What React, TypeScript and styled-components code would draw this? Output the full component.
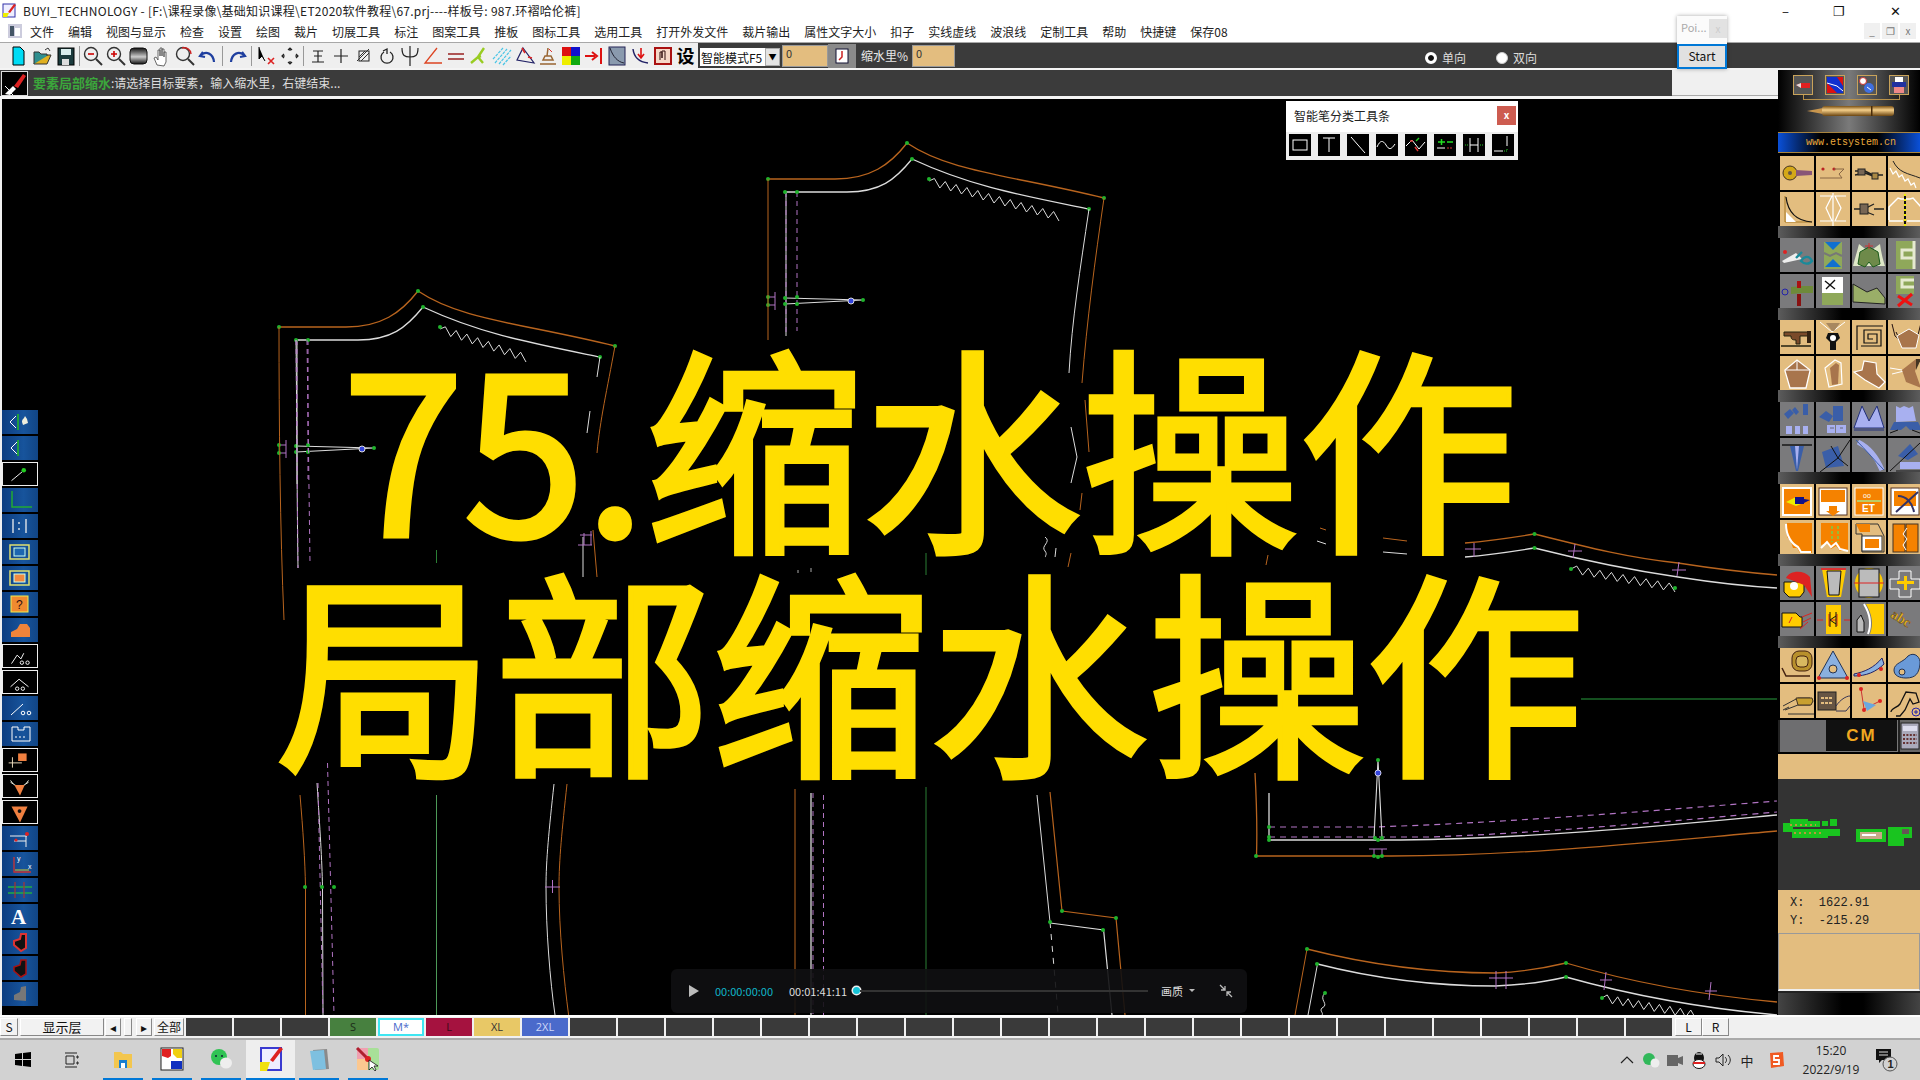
import React from "react";
import styled, { createGlobalStyle } from "styled-components";

const Global = createGlobalStyle`
  html, body { margin: 0; padding: 0; background: #f0f0f0; overflow: hidden; }
  * { box-sizing: border-box; }
`;
const UI = `"Noto Sans CJK SC", "Open Sans", sans-serif`;

const Screen = styled.div`
  position: relative; width: 1920px; height: 1080px; overflow: hidden;
  display: flex; flex-direction: column; font-family: ${UI}; background: #f0f0f0; color: #111;
`;
const TitleBar = styled.div`
  height: 22px; background: #fff; display: flex; align-items: center; padding: 0 0 2px 2px; gap: 6px;
  font-size: 12px; letter-spacing: .25px; white-space: nowrap; color: #222;
`;
const WinCtl = styled.div`
  margin-left: auto; display: flex; width: 138px; justify-content: space-between; padding-right: 19px;
  font-size: 13px; color: #111;
`;
const MenuBar = styled.div`
  height: 20px; background: #fff; display: flex; align-items: center; padding: 0 0 2px 8px; font-size: 12px; color: #222;
`;
const MenuItems = styled.div`display: flex; gap: 14px; margin-left: 8px; white-space: nowrap;`;
const MdiCtl = styled.div`
  margin-left: auto; display: flex; gap: 2px; padding-right: 4px;
`;
const MdiBtn = styled.div`
  width: 16px; height: 16px; background: #f0f0f0; color: #777; font-size: 10px; line-height: 16px; text-align: center;
`;
const ToolRow = styled.div`
  height: 28px; display: flex; border-top: 1px solid #a8a8a8; border-bottom: 2px solid #f4f4f4; background: #3b3b3b;
`;
const ToolIcons = styled.div`
  width: 698px; height: 100%; background: #efefef; display: flex; align-items: center; padding-left: 8px;
`;
const ToolBtn = styled.div`
  width: 23px; height: 23px; flex: none; display: flex; align-items: center; justify-content: center;
  font-size: 18px; line-height: 23px; font-weight: 700; color: #000;
`;
const ToolSep = styled.div<{ $w: number }>`
  width: ${p => p.$w}px; flex: none; height: 20px; position: relative;
  &::after { content: ""; display: block; width: 1px; height: 100%; margin: 0 auto; background: #999; }
`;
const ToolRight = styled.div`
  flex: 1; display: flex; align-items: center; padding-left: 2px; color: #ddd; font-size: 12px;
`;
const ModeSelect = styled.div`
  width: 80px; height: 18px; background: #fff; color: #111; font-size: 12px; display: flex; align-items: center; white-space: nowrap;
  overflow: hidden; padding-left: 1px; position: relative; margin-top: 3px;
`;
const SelectArrow = styled.span`
  position: absolute; right: 0; top: 0; width: 15px; height: 18px; background: #e4e4e4; border: 1px solid #aaa; color: #000;
  font-size: 8px; line-height: 16px; text-align: center;
`;
const TanInput = styled.div<{ $w: number }>`
  width: ${p => p.$w}px; height: 22px; margin-left: 2px; background: #e3bd7f; border: 1px solid #999; color: #333;
  font-size: 11px; line-height: 14px; padding-left: 3px;
`;
const SquareBtn = styled.div`
  width: 28px; height: 24px; background: #8a8a8a; display: flex; align-items: center; justify-content: center;
`;
const ToolLabel = styled.span`margin-left: 5px; margin-right: 2px; font-size: 12px; white-space: nowrap; color: #e8e8e8;`;
const RadioWrap = styled.label<{ $ml: number }>`
  margin-left: ${p => p.$ml}px; margin-top: 4px; display: flex; align-items: center; gap: 5px; color: #ddd; font-size: 12px;
`;
const RadioDot = styled.span<{ $on?: boolean }>`
  width: 12px; height: 12px; border-radius: 50%; background: #fff; display: block;
  border: ${p => (p.$on ? "3px solid #fff" : "1px solid #ccc")};
  box-shadow: ${p => (p.$on ? "inset 0 0 0 4px #111" : "none")};
`;
const Popover = styled.div`
  position: absolute; left: 1677px; top: 16px; width: 50px; height: 53px; background: #fbfbfb;
  box-shadow: 0 0 4px rgba(0,0,0,.35); display: flex; flex-direction: column; z-index: 5;
`;
const PopHead = styled.div`
  height: 28px; display: flex; font-size: 11px; color: #aaa; padding: 3px 0 0 4px; justify-content: space-between;
`;
const PopClose = styled.span`
  width: 18px; height: 19px; background: #e2e2e2; color: #ccc; text-align: center; font-size: 10px; line-height: 19px;
`;
const StartBtn = styled.div`
  height: 25px; border: 2px solid #0078d7; background: #e1e1e1; color: #111; font-size: 12px; text-align: center; line-height: 20px;
`;
const Workspace = styled.div`height: 945px; display: flex;`;
const WorkColumn = styled.div`width: 1778px; display: flex; flex-direction: column;`;
const PromptRow = styled.div`
  height: 29px; display: flex; background: #f0f0f0; border-bottom: 3px solid #f4f4f4; box-shadow: inset 0 -1px 0 #aaa;
`;
const PromptBar = styled.div`
  width: 1672px; background: #3b3b3b; display: flex; align-items: center; font-size: 12px; color: #ddd; padding: 0 0 2px 1px;
`;
const PromptGreen = styled.span`color: #3ba63b; font-weight: 700; font-size: 13px; margin-left: 5px;`;
const PromptIcon = styled.div`
  width: 27px; height: 25px; background: #000; border: 1px solid #ddd; display: flex; margin-top: 2px;
`;
const Canvas = styled.div`
  flex: 1; margin-left: 2px; background: #000; position: relative; overflow: hidden;
`;
const CanvasArt = styled.svg`position: absolute; left: 0; top: 0;`;
const BigTitle = styled.div`
  position: absolute; left: 0; top: 230px; width: 1856px; text-align: center; color: #ffde00;
  font-family: "Noto Sans CJK SC", "Liberation Sans", sans-serif; font-weight: 400; font-size: 218px; line-height: 224px; white-space: nowrap;
  -webkit-text-stroke: 5px #ffde00;
`;
const LeftTools = styled.div`
  position: absolute; left: 0; top: 311px; display: flex; flex-direction: column; gap: 2px;
`;
const LeftBtn = styled.div<{ $dark?: boolean }>`
  width: 36px; height: 24px; display: flex;
  background: ${p => (p.$dark ? "#000" : "linear-gradient(90deg,#0d3d80,#17549c 60%,#114585)")};
  border: ${p => (p.$dark ? "1px solid #eee" : "none")};
`;
const Palette = styled.div`
  position: absolute; left: 1284px; top: 2px; width: 232px; height: 59px; background: #fff;
  display: flex; flex-direction: column;
`;
const PaletteHead = styled.div`
  height: 31px; padding: 0 2px 2px 8px; display: flex; align-items: center; justify-content: space-between; font-size: 12px; color: #222;
`;
const PaletteClose = styled.span`
  width: 19px; height: 19px; background: #cd5c50; color: #fff; font-size: 10px; font-weight: 700; text-align: center; line-height: 18px;
`;
const PaletteRow = styled.div`
  flex: 1; background: #eee; display: flex; gap: 7px; padding: 2px 3px;
`;
const PaletteBtn = styled.div`width: 22px; height: 22px; background: #000; display: flex;`;
const Player = styled.div`
  position: absolute; left: 669px; top: 870px; width: 576px; height: 44px; border-radius: 6px; background: rgba(16,16,18,.9);
  display: flex; align-items: center; font-size: 11px; color: #ddd; padding: 0 0 1px 18px;
`;
const PlayIcon = styled.div`
  width: 0; height: 0; border-left: 10px solid #bbb; border-top: 6px solid transparent; border-bottom: 6px solid transparent;
`;
const TimeNow = styled.span`color: #10b5c8; margin-left: 16px; width: 74px; white-space: nowrap;`;
const TimeAll = styled.span`color: #ddd; margin-left: 0; width: 58px; white-space: nowrap;`;
const Thumb = styled.span`
  width: 7px; height: 7px; border-radius: 50%; background: #16c4d8; box-shadow: 0 0 0 1.5px #eee; flex: none; margin-left: 6px;
`;
const Track = styled.div`width: 288px; height: 2px; background: #333; margin-left: 0;`;
const Quality = styled.span`margin-left: 13px; white-space: nowrap;`;
const Caret = styled.span`
  margin-left: 6px; width: 0; height: 0; border-top: 3px solid #bbb; border-left: 3px solid transparent; border-right: 3px solid transparent;
`;
const Shrink = styled.div`margin-left: 24px; display: flex;`;

const Panel = styled.div`
  width: 142px; display: flex; flex-direction: column; background: #000;
`;
const PanelHead = styled.div`
  height: 62px; background: linear-gradient(90deg,#000,#7a7a7a 50%,#000); position: relative; display: flex; flex-direction: column; align-items: center; padding-left: 4px;
`;
const HeadIcons = styled.div`display: flex; gap: 12px; margin-top: 5px;`;
const HeadIcon = styled.div`width: 20px; height: 20px; border: 1px solid #c9a35a; background: #555; display: flex;`;
const HeadRail = styled.div`
  width: 97px; height: 5px; border: 1px solid #b8914a; border-top: none; margin-bottom: 5px;
`;
const Banner = styled.div`
  height: 21px; background: linear-gradient(90deg,#0a50d8,#000 30%,#000 70%,#0a50d8); border-top: 1px solid #a8843e; border-bottom: 1px solid #a8843e;
  color: #e8a83c; font-family: "Liberation Mono", monospace; font-size: 10px; text-align: center; line-height: 19px; padding-left: 4px;
`;
const Band = styled.div`
  height: 12px; background: linear-gradient(90deg,#5c5c5c,#000 45%,#000 60%,#5c5c5c);
`;
const TileGrid = styled.div<{ $first?: boolean }>`
  display: grid; grid-template-columns: repeat(4, 34px); gap: 2px; padding-left: 2px; overflow: hidden; width: 142px;
  margin-top: ${p => (p.$first ? 3 : 0)}px; background: #000;
`;
const Tile = styled.div<{ $tone: string }>`
  width: 34px; height: 34px; display: flex;
  background: ${p => (p.$tone === "tan" ? "#e3bd7f" : "#7a7a7c")};
`;
const UnitRow = styled.div`
  height: 32px; margin-top: 2px; display: flex; background: #222; padding-left: 2px;
`;
const UnitGray = styled.div`width: 46px; background: #6e6e70;`;
const UnitCM = styled.div`
  width: 72px; background: #111; color: #f0a820; font-family: "Liberation Sans", sans-serif; font-weight: 700; font-size: 17px; letter-spacing: 2px; text-align: center; line-height: 31px;
  border-bottom: 1px solid #777; border-right: 1px solid #777;
`;
const UnitCalc = styled.div`margin-left: 2px; width: 20px; background: #666; display: flex; flex: 1;`;
const TanStrip = styled.div`height: 25px; background: #e3bd7f; margin-top: 2px;`;
const MiniMap = styled.div`height: 111px; background: #333; display: flex; align-items: center;`;
const Coords = styled.div`
  height: 43px; background: #e3bd7f; font-family: "Liberation Mono", monospace; font-size: 12px; color: #222; padding: 4px 0 0 12px; line-height: 18px; white-space: pre;
`;
const NoteBox = styled.div`
  height: 58px; background: #e3bd7f; border: 1px solid #999; border-bottom: 2px solid #eee;
`;
const PanelFoot = styled.div`flex: 1; background: linear-gradient(90deg,#444,#000 45%,#000 60%,#444); border-top: 2px solid #222;`;

const LayerBar = styled.div`
  height: 25px; display: flex; align-items: center; padding-bottom: 1px; border-top: 2px solid #fff; border-bottom: 2px solid #aaa; background: #f0f0f0; font-size: 12px;
`;
const LayerBtn = styled.div<{ $w: number; $ml?: number; $big?: boolean }>`
  width: ${p => p.$w}px; height: 18px; margin-left: ${p => p.$ml ?? 0}px; background: #f2f2f2; text-align: center; line-height: 16px; font-size: ${p => (p.$big ? 13 : 12)}px; color: #111;
  border-right: 1px solid #888; border-bottom: 1px solid #888; border-top: 1px solid #fff; border-left: 1px solid #fff; flex: none;
`;
const Cells = styled.div`display: flex; gap: 2px; margin-left: 2px;`;
const Cell = styled.div<{ $bg: string; $fg?: string; $ring?: boolean }>`
  width: 46px; height: 18px; background: ${p => p.$bg}; color: ${p => p.$fg ?? "#222"}; font-size: 11px; text-align: center; line-height: 17px; flex: none;
  font-family: "Open Sans", sans-serif;
  border: ${p => (p.$ring ? "2px solid #3fe6f2" : "none")};
  ${p => (p.$ring ? "line-height: 13px;" : "")}
`;
const Taskbar = styled.div`
  flex: 1; background: #d2d2d2; display: flex; align-items: stretch; position: relative;
`;
const TaskLeft = styled.div`display: flex; align-items: center;`;
const TaskPlain = styled.div<{ $w: number }>`
  width: ${p => p.$w}px; display: flex; align-items: center; justify-content: center;
`;
const TaskApp = styled.div<{ $active?: boolean; $ml: number }>`
  width: 40px; height: 40px; margin-left: ${p => p.$ml}px; display: flex; align-items: center; justify-content: center;
  border-bottom: 2px solid #0078d7;
  ${p => (p.$active ? "width: 49px; background: #eee;" : "")}
`;
const Tray = styled.div`
  margin-left: auto; display: flex; align-items: center; padding-right: 20px;
`;
const TrayIcon = styled.div<{ $w: number }>`
  width: ${p => p.$w}px; display: flex; justify-content: center; font-size: 13px; color: #222;
`;
const Clock = styled.div`
  width: 72px; margin-left: 2px; text-align: center; font-size: 12px; line-height: 19px; color: #222; font-family: "Open Sans", sans-serif;
`;
const Notify = styled.div`margin-left: 7px; display: flex;`;

/* ---------- icon data ---------- */
type N = React.ReactNode;
const Ic = ({ s = 22, h, c }: { s?: number; h?: number; c: N }) => (
  <svg width={s} height={h ?? s} viewBox={`0 0 ${s} ${h ?? s}`} fill="none">{c}</svg>
);

const toolGroups: N[][] = [
  [
    <path d="M4 2h7l4 4v14H4z" fill="#00dcf5" stroke="#000" />,
    <><path d="M2 19l3-9h14l-4 9z" fill="#e0b020" stroke="#333" /><path d="M2 19V7h5l2 2h6v2" fill="#2f8f8f" stroke="#333" /><path d="M13 5l3-2 2 3" stroke="#333" /></>,
    <><rect x="3" y="3" width="16" height="17" fill="#1b3b3d" stroke="#000" /><rect x="6" y="4" width="10" height="6" fill="#d8ecec" /><rect x="7" y="14" width="7" height="6" fill="#ddd" /></>,
  ],
  [
    <><circle cx="9" cy="9" r="6.5" stroke="#333" strokeWidth="1.4" /><path d="M14 14l6 6" stroke="#333" strokeWidth="2" /><path d="M6 9h6" stroke="#c00" strokeWidth="1.6" /></>,
    <><circle cx="9" cy="9" r="6.5" stroke="#333" strokeWidth="1.4" /><path d="M14 14l6 6" stroke="#333" strokeWidth="2" /><path d="M6 9h6M9 6v6" stroke="#c00" strokeWidth="1.6" /></>,
    <><rect x="2" y="3" width="17" height="16" rx="4" fill="url(#mon)" stroke="#111" /><defs><linearGradient id="mon" x1="0" y1="0" x2="0" y2="1"><stop offset="0" stopColor="#111" /><stop offset=".55" stopColor="#ccc" /><stop offset="1" stopColor="#111" /></linearGradient></defs></>,
    <path d="M6 20l-3-7 2-1 2 3V5h2v6-8h2v8-7h2v8-5h2v10l-2 4z" fill="#fff" stroke="#444" strokeWidth=".8" />,
    <><circle cx="9" cy="9" r="6.5" stroke="#333" strokeWidth="1.4" /><path d="M14 14l6 6" stroke="#333" strokeWidth="2" /><path d="M8 3c5-1 9 2 9 6" stroke="#c22" strokeWidth="1.4" /></>,
    <path d="M6 7l-3 4 5 1M4 10c5-4 12-2 13 7" stroke="#1f3f9f" strokeWidth="2.2" />,
  ],
  [<path d="M16 7l3 4-5 1M18 10c-5-4-12-2-13 7" stroke="#1f3f9f" strokeWidth="2.2" />],
  [
    <><path d="M3 2v12l3-3 3 5" fill="#000" stroke="#000" /><path d="M12 13l6 6M18 13l-6 6" stroke="#d22" strokeWidth="1.6" /></>,
    <path d="M11 3v3M11 16v3M3 11h3M16 11h3M9 5l2-2 2 2M9 17l2 2 2-2M5 9l-2 2 2 2M17 9l2 2-2 2" stroke="#222" strokeWidth="1.2" />,
  ],
  [
    <path d="M6 6h10M11 6v11M7 11h8M5 17h12" stroke="#222" strokeWidth="1.2" />,
    <path d="M11 4v14M4 11h14" stroke="#222" strokeWidth="1.2" />,
    <><rect x="6" y="6" width="10" height="10" stroke="#222" /><path d="M4 16L16 4M8 16l8-8M6 12l6-6" stroke="#333" /></>,
    <path d="M7 6l4-2v5M14 7a6 6 0 1 1-6 0" stroke="#222" strokeWidth="1.3" />,
    <path d="M11 1v20M3 3c0 8 3 9 8 9s8-1 8-9" stroke="#222" strokeWidth="1.2" />,
    <path d="M15 3L3 18h17" stroke="#d42" strokeWidth="1.3" />,
    <path d="M3 9h16M3 14h16" stroke="#922" strokeWidth="1.5" />,
    <path d="M16 3l-6 9 5 6M3 18l7-6 3-1" stroke="#9c2" strokeWidth="2.4" />,
    <path d="M4 18L16 4M8 19L20 5M2 14L12 3M12 20l8-9" stroke="#49c5e6" strokeWidth="1.2" strokeDasharray="3 1" />,
    <><path d="M9 3l11 15L3 15z" stroke="#226" strokeWidth="1.2" /><path d="M8 3l3 5M14 12l4 1" stroke="#d22" strokeWidth="1.6" /></>,
    <><path d="M3 19h16M6 15h10l-2-4H8zM10 11l1-8" stroke="#963" strokeWidth="1.5" /><path d="M12 4l3 3" stroke="#d33" /></>,
    <><rect x="2" y="2" width="9" height="9" fill="#d11" /><rect x="11" y="2" width="9" height="9" fill="#11c" /><rect x="2" y="11" width="9" height="9" fill="#ee0" /><rect x="11" y="11" width="9" height="9" fill="#1a1" /></>,
    <path d="M2 11h10m-3-4l5 4-5 4M18 3v16" stroke="#d11" strokeWidth="2" />,
    <><rect x="3" y="2" width="16" height="18" fill="#8a9aae" stroke="#225" /><path d="M4 3c3 9 8 14 14 15" stroke="#223" /></>,
    <><path d="M4 4c1 8 5 13 15 14" stroke="#226" strokeWidth="1.5" /><path d="M12 3v9m-3-3l3 4 3-4" stroke="#d11" strokeWidth="1.6" /></>,
    <><rect x="3" y="3" width="16" height="16" fill="#f6d8c8" stroke="#a11" strokeWidth="2" /><path d="M8 15V7h2v6-7h3v9" stroke="#311" /></>,
    <span>设</span>,
  ],
];
const leftIcons: { d?: boolean; c: N }[] = [
  { c: <><path d="M14 6l-6 6 6 6" stroke="#fff" /><path d="M16 4v16" stroke="#2b2" strokeWidth="1.5" /><path d="M20 12c0-3 2-3 3-6l2 3 1 4-5 2z" fill="#eed" /></> },
  { c: <><path d="M15 6l-6 6 6 6" stroke="#fff" /><path d="M16 4v16" stroke="#2b2" strokeWidth="1.5" /></> },
  { d: true, c: <><path d="M9 18L21 8" stroke="#fff" /><circle cx="22" cy="7" r="2.4" fill="#2c2" /></> },
  { c: <path d="M10 3v16h20" stroke="#2a3" strokeWidth="1.5" /> },
  { c: <path d="M11 5v14M24 5v14M17 8v2M17 14v2" stroke="#eee" strokeWidth="1.3" /> },
  { c: <><rect x="8" y="5" width="19" height="14" stroke="#dfe070" strokeWidth="1.5" /><rect x="12" y="8" width="11" height="8" fill="#1c66b0" stroke="#cfe" /></> },
  { c: <><rect x="8" y="5" width="19" height="14" stroke="#dfe070" strokeWidth="1.5" /><rect x="12" y="8" width="11" height="8" fill="#f08a40" stroke="#cfe" /></> },
  { c: <><rect x="9" y="4" width="17" height="16" fill="#f08a30" stroke="#ee5" /><text x="14" y="17" fontSize="12" fill="#311" fontFamily="Liberation Sans">?</text></> },
  { c: <path d="M9 19v-5l6-3 3-5h7l3 4v9z" fill="#f0843a" /> },
  { d: true, c: <><path d="M9 19l6-9 4 4 3-6" stroke="#fff" /><circle cx="20" cy="18" r="1.8" stroke="#fff" /><circle cx="26" cy="18" r="1.8" stroke="#fff" /></> },
  { d: true, c: <><path d="M8 16l9-8 10 8" stroke="#fff" /><circle cx="15" cy="18" r="1.8" stroke="#fff" /><circle cx="21" cy="18" r="1.8" stroke="#fff" /></> },
  { c: <><path d="M9 19l12-11" stroke="#fff" /><circle cx="21" cy="17" r="1.8" stroke="#fff" /><circle cx="27" cy="17" r="1.8" stroke="#fff" /></> },
  { c: <><path d="M10 5v14h18V5h-6v3h-6V5z" stroke="#fff" /><path d="M13 15h2M17 15h2M21 15h2" stroke="#fff" /></> },
  { d: true, c: <><path d="M10 8v11M6 14h14" stroke="#f0e0c0" /><rect x="16" y="4" width="9" height="8" fill="#f08040" /></> },
  { d: true, c: <><path d="M8 7l8 5M27 7l-8 5M8 5l3 4M27 5l-3 4" stroke="#eed" /><path d="M12 10h11l-5 11z" fill="#f08040" /></> },
  { d: true, c: <><path d="M9 5h17l-8 17z" fill="#f08040" /><circle cx="17.5" cy="10" r="2" fill="#111" /></> },
  { c: <><path d="M8 10h17M12 15h12M24 10v11" stroke="#eee" /><circle cx="25" cy="8" r="2" fill="#d22" /><circle cx="14" cy="14" r="1.6" fill="#d22" /></> },
  { c: <><path d="M12 5v15h17" stroke="#c33" strokeWidth="1.3" /><path d="M13 18h14" stroke="#cc3" /><text x="15" y="9" fontSize="7" fill="#fff" fontFamily="Liberation Sans">y</text><text x="26" y="17" fontSize="7" fill="#fff" fontFamily="Liberation Sans">x</text></> },
  { c: <><path d="M6 9h24M6 15h24" stroke="#2a4" strokeWidth="1.3" /><path d="M13 4v16M22 4v16" stroke="#a33" strokeWidth="1.2" /></> },
  { c: <text x="9" y="20" fontSize="21" fontWeight="700" fill="#fff" fontFamily="Liberation Serif">A</text> },
  { c: <path d="M24 4v14l-5 3-7-6v-4l6-2 1-5z" fill="#111" stroke="#d33" strokeWidth="2" /> },
  { c: <path d="M24 4v14l-5 3-7-6v-4l6-2 1-5z" fill="#111" stroke="#a11" strokeWidth="1.5" /> },
  { c: <path d="M24 4v15l-12-1v-5l6-3 1-5z" fill="#777" /> },
];

const paletteIcons: N[] = [
  <rect x="4" y="6" width="14" height="10" stroke="#fff" />,
  <path d="M5 4h12M11 4v14" stroke="#fff" />,
  <path d="M4 3l14 16" stroke="#fff" />,
  <path d="M1 13c3-7 6-7 9-2s5 5 9-1" stroke="#fff" />,
  <><path d="M1 12l6-6 7 9 6-7" stroke="#fff" /><path d="M5 7h3M10 13l3 4" stroke="#d33" strokeWidth="1.5" /><path d="M14 4l-3 3" stroke="#2c2" strokeWidth="1.4" /></>,
  <><path d="M4 8h7M7.5 5v6M13 8h6" stroke="#2d2" strokeWidth="1.5" /><path d="M3 14h8" stroke="#fff" /><path d="M13 14h6" stroke="#d33" strokeDasharray="2 1" /></>,
  <><path d="M7 4v14M15 4v14M7 11h8" stroke="#fff" /><path d="M2 11h3M17 11h3" stroke="#2c2" strokeDasharray="1 1" /></>,
  <><path d="M15 2v10" stroke="#fff" /><path d="M2 17h9" stroke="#fff" /><path d="M12 17h3v-3" stroke="#2c2" strokeDasharray="1 1" /></>,
];

const tan = "tan", gray = "gray";
const O = "#f58200", Bk = "#111", Br = "#a8754c", Bl = "#a8b0f0", Gr = "#8fa85a";
const tileGroups: { tone: string; icons: N[] }[] = [
  { tone: tan, icons: [
    <><circle cx="10" cy="17" r="7" fill="#d4a818" stroke="#432" /><circle cx="10" cy="17" r="2" fill="#654" /><path d="M16 14l16 1v4l-16 1z" fill="#857" /></>,
    <><circle cx="7" cy="13" r="1.6" fill="#b22" /><circle cx="18" cy="13" r="1.6" fill="#b22" /><path d="M4 22h22l-3-4 5-5H18" stroke="#864" /></>,
    <><path d="M3 15h10l8 4h10M3 19l10-2 8 3" stroke="#222" strokeWidth="1.4" /><rect x="6" y="13" width="7" height="6" fill="#765" stroke="#222" /><rect x="20" y="17" width="6" height="6" fill="#a84" stroke="#222" /></>,
    <><path d="M5 5c6 12 14 12 27 17" stroke="#222" /><path d="M2 12l3 6 3-3 3 6 3-2 3 6 3-2 3 6 3-2 2 5" stroke="#fff" strokeWidth="1.2" /></>,
  ]},
  { tone: tan, icons: [
    <><path d="M5 4v26h27" stroke="#a87b28" /><path d="M6 20l10 10H6z" fill="#fff" /><path d="M6 5c2 16 10 24 26 25" stroke="#111" strokeWidth="1.2" /></>,
    <path d="M4 4h12l-6 12 6 13H4M30 4H19l6 12-6 13h11M17 1v33" stroke="#fff" strokeWidth="1.2" />,
    <><path d="M2 17h10l10-5M12 19l10 4M22 17h10" stroke="#222" strokeWidth="1.3" /><rect x="8" y="12" width="8" height="10" fill="#765" stroke="#222" /></>,
    <><path d="M1 28V15l9-9 3 1h9l3-1 8 9" stroke="#fff" strokeWidth="1.5" /><path d="M1 29h14M19 29h15" stroke="#fff" strokeWidth="1.5" /><path d="M17 2v32" stroke="#111" strokeWidth="2" /><path d="M17 2v32" stroke="#ee0" strokeDasharray="2 3" strokeWidth="2" /></>,
  ]},
  { tone: gray, icons: [
    <><path d="M2 23l14-8 6 6-18 4" fill="#eee" /><circle cx="5" cy="14" r="2" fill="#d22" /><path d="M16 20l6-6M21 23c3-5 8-6 11 0-3 4-8 3-11 0z" stroke="#1a8a9a" strokeWidth="2.4" /></>,
    <><rect x="8" y="4" width="18" height="27" fill={Gr} /><path d="M8 15l6 3 6-3 6 3" stroke="#777" strokeWidth="2" /><path d="M17 12l-8-8h16zM17 21l-8 8h16z" fill="#1070d0" /></>,
    <><path d="M1 28c2-8 4-14 6-22l10 8 11-8c1 8 3 16 5 22z" fill="#dfe8c8" /><path d="M8 14l9-5 9 5 2 12-7 3-4-5-4 5-7-3z" fill="#6e8a4a" stroke="#1a5a1a" /><path d="M17 5v6M13 8h8" stroke="#c33" /></>,
    <><rect x="8" y="3" width="18" height="28" fill={Gr} /><path d="M26 3v28M26 12H14v8h12" stroke="#e6ead0" strokeWidth="3" /></>,
  ]},
  { tone: gray, icons: [
    <><circle cx="5" cy="18" r="3" stroke="#22a" /><path d="M11 13l12-1h10v7H23l-12 1z" fill="#6e8a3a" /><rect x="17" y="7" width="4" height="7" fill="#a11" /><rect x="17" y="20" width="4" height="12" fill="#811" /></>,
    <><rect x="6" y="3" width="21" height="16" fill="#fff" /><rect x="6" y="19" width="21" height="12" fill={Gr} /><path d="M9 7l10 8M19 6l-9 9" stroke="#111" strokeWidth="1.4" /></>,
    <path d="M1 28V10l14 8 10-4 8 10v6z" fill="#9aae68" stroke="#222" />,
    <><rect x="8" y="2" width="18" height="18" fill={Gr} /><path d="M26 6H14v7h12" stroke="#e6ead0" strokeWidth="3" /><path d="M10 22l14 9M24 20L10 32" stroke="#e11" strokeWidth="3" /></>,
  ]},
  { tone: tan, icons: [
    <><path d="M4 12h24v4H20v8H16v-4c-4 0-5-1-5-4H4z" fill="#7a4a2a" stroke="#221" /><path d="M1 26h30" stroke="#221" strokeWidth="1.5" /><rect x="27" y="11" width="4" height="12" fill="#321" /></>,
    <><path d="M4 2l12 10L29 2" stroke="#fff" /><path d="M10 3h14l-6 8h-2z" fill="#a88860" /><path d="M12 13h10l2 5-4 4v8h-6v-8l-4-4z" fill={Bk} /><circle cx="17" cy="18" r="3" fill="#fff" /></>,
    <path d="M5 30V6h26M9 26h20V10H12v13h13V14H16v5h5" stroke="#111" strokeWidth="1.2" />,
    <><path d="M4 4l3 12 5 4-4-8M33 3l-3 12" stroke="#211" /><path d="M9 16l12-7 10 6-3 13H14z" fill={Br} stroke="#fff" /></>,
  ]},
  { tone: tan, icons: [
    <><path d="M5 14l12-10 13 10v1l-4 17H10L5 15z" fill={Br} stroke="#fff" strokeWidth="1.3" /><path d="M5 14h25M17 4v10" stroke="#fff" /></>,
    <><path d="M9 12l10-8 6 3 1 21-13 3z" stroke="#fff" strokeWidth="1.2" /><path d="M14 12l6-5 3 2-1 19-6 1z" fill={Br} /></>,
    <path d="M2 16l8-2 2-9 12 2 1 11 8 8-6 6-14-8z" fill={Br} stroke="#fff" strokeWidth="1.2" />,
    <><path d="M2 12l12 2M4 18l12-3" stroke="#fff" /><path d="M14 14L28 3h4l-5 12 6 17-15-6z" fill={Br} /><path d="M28 3h5l-5 11" fill="#432" /></>,
  ]},
  { tone: gray, icons: [
    <><path d="M4 12l6-5 4 4-6 6zM12 8l3-3 4 5-3 3zM23 2h5v11h-5z" fill="#3a5ea8" /><path d="M6 24h6v8H6zM15 24h5v8h-5zM23 24h5v8h-5z" fill={Bl} /></>,
    <><path d="M3 15l7-6 7 5-4 6zM17 4h10v15H17z" fill="#3a5ea8" /><path d="M11 23h8v8h-8zM20 23h10v8H20z" fill={Bl} /><path d="M14 26h4M24 26h3" stroke="#667" /></>,
    <path d="M2 26l8-22 7 15 8-15 7 22zM2 28h30" fill={Bl} stroke="#22307a" />,
    <><path d="M8 4l4 2 4-2 5 2 4-2 3 15-20 1z" fill={Bl} /><path d="M6 20h24l4 8H22l-4-4-5 4H2z" fill="#3a5ea8" /><path d="M2 31l8-3M24 28l8 3" stroke="#111" /></>,
  ]},
  { tone: gray, icons: [
    <><path d="M2 7h30" stroke="#111" strokeWidth="1.4" /><path d="M10 8h14l-6 25h-2z" fill="#3a5ea8" /><path d="M15 8l2 24 2-24z" fill={Bl} /></>,
    <><path d="M6 14l16-6 6 20-18 2z" fill="#3a5ea8" /><path d="M4 34l18-14L34 2M15 8l7 12 10 8" stroke="#111" /></>,
    <><path d="M6 4c12 6 20 18 24 28" stroke={Bl} strokeWidth="5" /><path d="M4 2c10 10 18 20 28 30" stroke="#3a5ea8" /></>,
    <><path d="M10 18L22 6l8 10-10 6z" fill="#3a5ea8" /><path d="M12 24h20v7H12z" fill={Bl} /><path d="M2 33l30-28M8 33h26" stroke="#111" /></>,
  ]},
  { tone: tan, icons: [
    <><rect x="3" y="4" width="28" height="27" fill="#f58200" stroke="#fff" strokeWidth="2" /><path d="M6 18l10-5 5 2v5l-5 2z" fill="#ee0" /><rect x="15" y="13" width="9" height="7" fill="#118" /><path d="M24 15l6 1-6 3" fill="#118" /></>,
    <><rect x="3" y="4" width="28" height="27" fill="#fff" stroke="#532" /><rect x="5" y="6" width="24" height="12" fill={O} /><path d="M13 22h8v5h3l-7 5-7-5h3z" fill={O} /></>,
    <><rect x="3" y="4" width="28" height="27" fill={O} stroke="#fff" /><path d="M5 17h24" stroke="#bc6" strokeWidth="2" /><text x="10" y="28" fontSize="10" fontFamily="Liberation Sans" fontWeight="700" fill="#fff">ET</text><text x="11" y="14" fontSize="7" fontFamily="Liberation Sans" fill="#fff">oo</text></>,
    <><rect x="3" y="4" width="28" height="27" fill="#fff" stroke="#532" /><rect x="6" y="7" width="22" height="15" fill={O} /><path d="M8 28l22-20M10 12c8 0 14 6 16 16" stroke="#336" strokeWidth="2" /></>,
  ]},
  { tone: tan, icons: [
    <><path d="M7 3h25v30H20l-3-5h-4l-2-6-4-5z" fill={O} /><path d="M6 4c0 12 6 20 12 23l3 5h10" stroke="#fff" strokeWidth="2" /></>,
    <><path d="M5 3h27v28H24l-4-5-5 3-4-6-6 2z" fill={O} /><path d="M5 28l6-6 4 5 5-4 4 6 8 2" stroke="#fff" strokeWidth="2" /><path d="M16 6v16M22 6v16" stroke="#9b3" strokeWidth="2" strokeDasharray="3 2" /></>,
    <><path d="M4 4h22l6 12v16H10V14H4z" stroke="#333" /><path d="M4 4h14v8H8z" fill={O} /><rect x="10" y="16" width="20" height="15" fill="#fff" stroke="#333" /><rect x="13" y="19" width="14" height="9" fill={O} /></>,
    <><rect x="5" y="4" width="12" height="28" fill={O} stroke="#432" /><rect x="18" y="4" width="12" height="28" fill={O} stroke="#432" /><path d="M19 8l-4 6 4 5-4 6 3 5" stroke="#fff" /></>,
  ]},
  { tone: gray, icons: [
    <><path d="M4 16h20v10l-4 5H9l-5-5z" fill="#fc0" stroke="#111" /><path d="M6 12c4-8 18-8 24-1l2 20-8-12-10-4z" fill="#d22" /><circle cx="14" cy="20" r="4" fill="#fff" /></>,
    <><path d="M6 3h24l-5 28H11z" fill="#fc0" /><path d="M11 5h14l-2 24H13z" fill="#bbb" stroke="#111" /><path d="M5 3h25" stroke="#d33" strokeWidth="2" /></>,
    <><ellipse cx="17" cy="17" rx="14" ry="15" fill="#fc0" /><rect x="7" y="3" width="20" height="28" fill="#bbb" stroke="#111" /><path d="M2 17h30" stroke="#d22" /></>,
    <><path d="M11 5h12v8h9v10h-9v8H11v-8H2V13h9z" stroke="#fff" /><path d="M16 10h3v5h7v3h-7v6h-3v-6H9v-3h7z" fill="#fc0" /></>,
  ]},
  { tone: gray, icons: [
    <><path d="M2 11h14l4 4h2v10H2z" fill="#fc0" stroke="#111" /><path d="M12 15l-3 6M22 15l10-4M23 20l8-4M20 27l8-7" stroke="#d22" /></>,
    <><rect x="10" y="3" width="15" height="29" fill="#fc0" /><path d="M1 18h6M28 18h6M13 12v12M21 12v12M14 18h6" stroke="#d22" /><path d="M14 10v15M20 10v15M14 18l6-4M14 18l6 4" stroke="#111" /></>,
    <><path d="M14 2h18v30H18c4-10 2-20-4-30z" fill="#fc0" /><path d="M12 2c6 10 8 20 4 30" stroke="#fff" strokeWidth="2" /><path d="M5 30V18l4-5 3 7v10z" fill="#bbb" stroke="#111" /></>,
    <text x="3" y="23" fontSize="14" fontWeight="700" fill="#e6b820" stroke="#532" strokeWidth=".4" fontFamily="Liberation Serif" transform="rotate(32 17 17)">abc</text>,
  ]},
  { tone: tan, icons: [
    <><rect x="12" y="3" width="20" height="20" rx="7" fill="#b8902c" stroke="#421" /><rect x="16" y="8" width="12" height="11" rx="4" fill="#d8b860" stroke="#421" /><path d="M2 20l4 8h24" stroke="#421" strokeWidth="1.5" /></>,
    <><path d="M17 3L2 30h30z" fill="#8ab0e0" stroke="#235" /><circle cx="17" cy="21" r="4" fill="#e3bd7f" stroke="#235" /><circle cx="3" cy="30" r="2" fill="#d22" /><circle cx="31" cy="30" r="2" fill="#d22" /></>,
    <><path d="M2 26c10-2 20-6 28-16l2 6c-8 8-18 12-30 12z" fill="#8ab0e0" stroke="#226" /><circle cx="7" cy="27" r="2" fill="#d22" /><circle cx="29" cy="21" r="2" fill="#d22" /></>,
    <><path d="M6 22c0-7 10-8 14-14 7-5 13 2 12 8-1 9-4 14-14 14-6 0-12-2-12-8z" fill="#6a9ad8" stroke="#235" /><circle cx="14" cy="24" r="3" fill="#e3bd7f" stroke="#235" /></>,
  ]},
  { tone: tan, icons: [
    <><path d="M3 22L18 14h12l3 3-3 4H18L5 26M8 30h26M3 26l6-3" stroke="#333" /><path d="M16 14h16l1 3-2 4H18z" fill="#c8a030" stroke="#432" /></>,
    <><rect x="2" y="8" width="18" height="18" fill="#654" stroke="#222" /><path d="M5 14h12M5 19h12" stroke="#e3bd7f" strokeWidth="2" strokeDasharray="3 1" /><path d="M20 22c4-6 10-10 14-10M20 27h10l4-5" stroke="#335" /></>,
    <><path d="M9 5l3 20 16-8" stroke="#c33" /><path d="M11 17l4 10 9-6z" fill="#6aa8e0" /><circle cx="9" cy="5" r="2" fill="#d22" /><circle cx="12" cy="26" r="2" fill="#d22" /><circle cx="28" cy="17" r="2" fill="#d22" /></>,
    <><path d="M3 28c0-4 6-4 9-8l6-12 10 1 3 9-6 2-3-5-5 11-5 6H8" stroke="#111" strokeWidth="1.3" /><circle cx="28" cy="28" r="4" stroke="#22a" /><path d="M26 28h4M28 26v4" stroke="#22a" /></>,
  ]},
];
const groupBands = [2, 4, 6, 8, 10, 12];

/* ---------- canvas drawing ---------- */
const OR = "#b8641e", WH = "#dcdcdc", PU = "#b274c4", GN = "#1fb32c";
const zig = (x0: number, y0: number, x1: number, y1: number, n: number, a: number) => {
  let d = `M${x0} ${y0}`;
  const dx = (x1 - x0) / n, dy = (y1 - y0) / n;
  for (let i = 1; i <= n; i++) {
    const o = i % 2 ? -a : a;
    d += ` L${x0 + dx * i} ${y0 + dy * i + o}`;
  }
  return d;
};
const L = ({ d, c = WH, w = 1, dash }: { d: string; c?: string; w?: number; dash?: string }) => (
  <path d={d} stroke={c} strokeWidth={w} strokeDasharray={dash} fill="none" />
);
const Dots = ({ p }: { p: number[][] }) => <>{p.map(([x, y], i) => <circle key={i} cx={x} cy={y} r="2" fill={GN} />)}</>;

const Bodice = ({ zigEnd, n }: { zigEnd: number[]; n: number }) => (
  <>
    <L d="M768 179 L835 179 C870 179 890 165 907 143 C950 172 1010 175 1104 198" c={OR} w={1.4} />
    <L d="M785 192 L847 192 C880 192 895 180 912 159 C970 186 1020 195 1089 209" w={1.3} />
    <L d={zig(929, 181, zigEnd[0], zigEnd[1], n, 4)} w={1} />
    <L d="M786 192 L786 336" />
    <L d="M786 192 L786 336" c={PU} dash="5 4" />
    <L d="M797 192 L797 331" c={PU} dash="5 4" />
    <L d="M785 298 L863 300 L785 304" w={1.2} />
    <circle cx="851" cy="301" r="3" fill="#3344dd" stroke="#ddd" />
    <path d="M775 292v18M768 297h7M768 305h7" stroke={PU} fill="none" />
    <L d="M768 297v8" c={GN} />
    <Dots p={[[768, 179], [907, 143], [1104, 198], [785, 192], [797, 192], [912, 159], [1089, 209], [929, 179], [785, 298], [785, 304], [797, 297], [797, 304], [863, 300], [768, 297], [768, 305]]} />
  </>
);

const Art = () => (
  <CanvasArt width="1776" height="916" viewBox="2 99 1776 916">
    <Bodice zigEnd={[1059, 217]} n={24} />
    <L d="M768 179 L768 340" c={OR} />
    <L d="M1104 198 C1095 260 1087 320 1082 383" c={OR} />
    <L d="M1089 209 C1080 270 1072 320 1069 373" />
    <g transform="translate(-489 148)"><Bodice zigEnd={[1015, 210]} n={16} /></g>
    <L d="M279 327 C279 420 280 530 284 620" c={OR} />
    <L d="M296 340 C297 430 297 500 298 568" />
    <L d="M296 340 L298 568" c={PU} dash="5 4" />
    <L d="M307 340 L310 563" c={PU} dash="5 4" />
    <L d="M615 346 C607 390 600 420 597 453" c={OR} />
    <L d="M600 357 L597 377M590 411 L587 433M583 537 L583 577" />
    <L d="M593 530 L597 577" c={OR} />
    <path d="M578 545h14M584 533v12M591 531v14M580 535h12" stroke={PU} fill="none" />
    <L d="M1071 427 L1077 457 L1071 483" />
    <L d="M1089 452 L1085 400M1082 493L1080 510" c={OR} />
    <L d="M1071 553 L1068 567" c={OR} />
    <L d="M1045 537 C1052 542 1040 546 1045 551 C1048 555 1044 556 1046 557M1056 548 L1055 557" />
    <L d="M798 570v3M811 568v4" c="#aaa" />
    <L d="M926 553 L926 575M436.5 550 L436.5 563" c="#2a7f35" />
    <L d="M300 795 C303 830 305 860 305.5 887 L305.5 1015" c={OR} />
    <L d="M317 783 C320 830 322 860 322.5 887 L323 1015" />
    <L d="M318 783 L323 1015" c={PU} dash="5 4" />
    <L d="M327.5 763 L334 1015" c={PU} dash="5 4" />
    <L d="M436.5 795 L436.5 1015" c="#4d9a58" />
    <L d="M554 784 C549 830 546 860 546 887 C546 930 550 980 555 1015" />
    <L d="M567 784 C562 830 559 860 559 887 C559 930 564 980 568.6 1015" c={OR} />
    <L d="M552.5 880v13M545 887h15" c={PU} />
    <L d="M795 789 L795 1015" c={OR} />
    <L d="M811 793 L811 1015" w={1.3} />
    <L d="M813 793 L813 1015" c={PU} dash="5 4" />
    <L d="M823.5 795 L823.5 1015" c={PU} dash="5 4" />
    <L d="M926 787 L926 1015" c="#2a7f35" />
    <L d="M1037 795 L1050 922" />
    <L d="M1050 922 L1058 1013" dash="6 6" />
    <L d="M1050 923 L1103.6 930 L1112 1015" w={1.2} />
    <L d="M1050 792 L1062 911 L1116 918 L1125 1015" c={OR} w={1.2} />
    <Dots p={[[305, 887], [322, 887], [334, 887], [1050, 922], [1062, 911], [1116, 918], [1103, 930]]} />
    <L d="M1465 543 C1490 541 1510 538 1534.5 534 C1590 548 1630 558 1678 563 C1710 568 1740 572 1777 575" c={OR} w={1.3} />
    <L d="M1465 557 C1490 555 1510 552 1534.5 548 C1590 562 1630 570 1678 577 C1710 582 1740 586 1777 588" w={1.3} />
    <L d={zig(1571, 569, 1675, 588, 18, 4)} />
    <path d="M1474 543v14M1465 549h16M1575 544l-2 14M1568 551h14M1679 562l-2 14M1672 570h14" stroke={PU} fill="none" />
    <L d="M1320 528 L1326 530M1383 538 L1407 541M1268 555 L1266 565" c={OR} />
    <L d="M1317 541 L1326 544M1383 552 L1407 554" />
    <L d="M1581 699 L1777 699" c="#1b6a2a" w={1.4} />
    <Dots p={[[1534.5, 534], [1534.5, 548], [1571, 569], [1675, 588]]} />
    <L d="M1255 773 C1257 810 1257 840 1256.5 856 L1391 856 C1520 856 1640 843 1777 831" c={OR} w={1.3} />
    <L d="M1269 793 L1269 840 L1400 840 C1540 838 1660 826 1777 815" w={1.3} />
    <L d="M1269 827 L1375 827 C1520 822 1660 810 1777 801" c={PU} dash="6 5" w={1.2} />
    <L d="M1269 837 L1431 837 C1560 832 1680 820 1777 812" c={PU} dash="6 5" w={1.2} />
    <L d="M1378 760 L1374 838 M1378 760 L1382 838" w={1.1} />
    <circle cx="1378" cy="773" r="3" fill="#3344dd" stroke="#cce" />
    <L d="M1369 849 H1387 M1374 849 v7 M1382 849 v7" c={PU} />
    <Dots p={[[1378, 760], [1269, 827], [1269, 837], [1269, 840], [1375, 838], [1382, 838], [1378, 840], [1256, 856], [1374, 856], [1378, 857], [1382, 856]]} />
    <L d="M1307 949 C1370 965 1430 973 1495.5 973 C1520 972 1545 968 1566 963 C1630 982 1700 995 1777 1002" c={OR} w={1.3} />
    <L d="M1307 949 L1295 1015" c={OR} />
    <L d="M1317.5 964 C1380 980 1440 986 1495.5 986 C1520 985 1545 982 1566 977 C1630 995 1700 1008 1777 1015" w={1.3} />
    <L d="M1317.5 964 L1308 1015" />
    <L d={zig(1602, 998, 1696, 1015, 18, 4)} />
    <L d="M1325 993 C1318 1000 1330 1004 1322 1008 C1319 1011 1324 1013 1322 1015" />
    <path d="M1496 971v18M1506 971v18M1489 978h24M1606 972l-2 18M1600 980h12M1711 982l-2 18M1705 991h12" stroke={PU} fill="none" />
    <Dots p={[[1307, 949], [1317, 964], [1566, 963], [1566, 977], [1325, 993], [1602, 998]]} />
  </CanvasArt>
);

const renderTiles = (from: number) =>
  tileGroups.slice(from, from + 2).flatMap((g, i) =>
    g.icons.map((c, j) => <Tile key={`${from}-${i}-${j}`} $tone={g.tone}><Ic s={34} c={c} /></Tile>)
  );

const App = () => (
  <Screen>
    <Global />
    <TitleBar>
      <Ic s={15} c={<><rect x="1" y="1" width="12" height="13" fill="#eef" stroke="#33a" /><path d="M6 9l6-8 2 1-6 8z" fill="#d22" /><path d="M1 10h6l-2 4H1z" fill="#ee0" /></>} />
      <span>BUYI_TECHNOLOGY - [F:\课程录像\基础知识课程\ET2020软件教程\67.prj----样板号: 987.环褶哈伦裤]</span>
      <WinCtl><span>–</span><span>❐</span><span>✕</span></WinCtl>
    </TitleBar>
    <MenuBar>
      <Ic s={14} c={<><rect x="0" y="0" width="14" height="14" fill="#ccd" /><rect x="2" y="2" width="4" height="10" fill="#456" /><rect x="7" y="4" width="5" height="8" fill="#fff" /></>} />
      <MenuItems>
        {["文件","编辑","视图与显示","检查","设置","绘图","裁片","切展工具","标注","图案工具","推板","图标工具","选用工具","打开外发文件","裁片输出","属性文字大小","扣子","实线虚线","波浪线","定制工具","帮助","快捷键","保存08"].map(m => <span key={m}>{m}</span>)}
      </MenuItems>
      <MdiCtl><MdiBtn>_</MdiBtn><MdiBtn>❐</MdiBtn><MdiBtn>x</MdiBtn></MdiCtl>
    </MenuBar>
    <ToolRow>
      <ToolIcons>
        {toolGroups.map((g, i) => (
          <React.Fragment key={i}>
            {i > 0 && <ToolSep $w={[4, 6, 7, 5][i - 1]} />}
            {g.map((c, j) => (
              <ToolBtn key={j}>{i === 4 && j === g.length - 1 ? c : <Ic c={c} />}</ToolBtn>
            ))}
          </React.Fragment>
        ))}
      </ToolIcons>
      <ToolRight>
        <ModeSelect>智能模式F5<SelectArrow>▼</SelectArrow></ModeSelect>
        <TanInput $w={46}>0</TanInput>
        <SquareBtn><Ic s={18} c={<><rect x="3" y="2" width="12" height="14" fill="#fff" stroke="#113" /><path d="M9 4v6l-3 3" stroke="#c22" strokeWidth="1.5" /></>} /></SquareBtn>
        <ToolLabel>缩水里%</ToolLabel>
        <TanInput $w={43}>0</TanInput>
        <RadioWrap $ml={470}><RadioDot $on />单向</RadioWrap>
        <RadioWrap $ml={30}><RadioDot />双向</RadioWrap>
      </ToolRight>
    </ToolRow>
    <Popover>
      <PopHead>Poi...<PopClose>x</PopClose></PopHead>
      <StartBtn>Start</StartBtn>
    </Popover>
    <Workspace>
      <WorkColumn>
        <PromptRow>
          <PromptBar>
            <PromptIcon><Ic s={25} c={<><path d="M3 22l8-8 3 3-6 6z" fill="#fff" /><path d="M12 14l9-12 3 2-8 12z" fill="#d22" /><path d="M3 14l4 4M8 20l3 3" stroke="#fff" /></>} /></PromptIcon>
            <PromptGreen>要素局部缩水</PromptGreen>:请选择目标要素，输入缩水里，右键结束...
          </PromptBar>
        </PromptRow>
        <Canvas>
          <Art />
          <BigTitle>75.缩水操作<br />局部缩水操作</BigTitle>
          <LeftTools>
            {leftIcons.map((b, i) => <LeftBtn key={i} $dark={b.d}><Ic s={36} h={24} c={b.c} /></LeftBtn>)}
          </LeftTools>
          <Palette>
            <PaletteHead>智能笔分类工具条<PaletteClose>x</PaletteClose></PaletteHead>
            <PaletteRow>{paletteIcons.map((c, i) => <PaletteBtn key={i}><Ic c={c} /></PaletteBtn>)}</PaletteRow>
          </Palette>
          <Player>
            <PlayIcon />
            <TimeNow>00:00:00:00</TimeNow>
            <TimeAll>00:01:41:11</TimeAll>
            <Thumb />
            <Track />
            <Quality>画质</Quality>
            <Caret />
            <Shrink><Ic s={14} c={<path d="M1 1l5 5M6 2v4H2M13 13L8 8M8 12V8h4" stroke="#bbb" strokeWidth="1.3" />} /></Shrink>
          </Player>
        </Canvas>
      </WorkColumn>
      <Panel>
        <PanelHead>
          <HeadIcons>
            <HeadIcon><Ic s={18} c={<><path d="M2 9l5-2h9v5H7z" fill="#e02020" /><path d="M2 9l5-2v5z" fill="#ddd" /></>} /></HeadIcon>
            <HeadIcon><Ic s={18} c={<><rect x="1" y="1" width="16" height="16" fill="#d11" /><path d="M1 1h10l6 9v7H11L1 7z" fill="#1030d0" /><path d="M1 7l10 3 6 5" stroke="#fff" /></>} /></HeadIcon>
            <HeadIcon><Ic s={18} c={<><circle cx="5" cy="5" r="3.5" fill="#fff" stroke="#c33" /><circle cx="11" cy="12" r="5" fill="#4070e0" /><path d="M9 11l4 3" stroke="#fff" /></>} /></HeadIcon>
            <HeadIcon><Ic s={18} c={<><rect x="5" y="1" width="8" height="5" fill="#fff" /><rect x="2" y="6" width="14" height="5" fill="#2030a0" /><rect x="4" y="11" width="10" height="6" fill="#e88" /></>} /></HeadIcon>
          </HeadIcons>
          <HeadRail />
          <Ic s={90} h={12} c={<><defs><linearGradient id="pen" x1="0" y1="0" x2="0" y2="1"><stop offset="0" stopColor="#7a5014" /><stop offset=".4" stopColor="#f6d08a" /><stop offset="1" stopColor="#6a4410" /></linearGradient></defs><path d="M1 6l16-3v6z" fill="#c8964e" /><rect x="16" y="1" width="72" height="10" rx="3" fill="url(#pen)" /><rect x="65" y="1" width="1.5" height="10" fill="#4a2c08" /></>} />
        </PanelHead>
        <Banner>www.etsystem.cn</Banner>
        <TileGrid $first>{renderTiles(0)}</TileGrid>
        {groupBands.map(b => (
          <React.Fragment key={b}>
            <Band />
            <TileGrid>{renderTiles(b)}</TileGrid>
          </React.Fragment>
        ))}
        <UnitRow>
          <UnitGray />
          <UnitCM>CM</UnitCM>
          <UnitCalc><Ic s={20} h={32} c={<><rect x="1" y="3" width="18" height="26" fill="#aab" stroke="#222" /><rect x="3" y="6" width="14" height="5" fill="#dde" /><path d="M3 15h14M3 19h14M3 23h14" stroke="#633" strokeWidth="2" strokeDasharray="2 1.4" /></>} /></UnitCalc>
        </UnitRow>
        <TanStrip />
        <MiniMap>
          <Ic s={142} h={40} c={<>
            <path d="M5 8h10v9H5zM12 4h18v8H12zM30 6h12v6H30zM44 6h6v5h-6zM52 4h7v7h-7zM14 14h36v9H14zM48 14h14v7H48z" fill="#19c41f" />
            <path d="M12 10h26M16 18h30" stroke="#b89a3a" strokeWidth="2" strokeDasharray="2 3" />
            <rect x="78" y="14" width="30" height="13" fill="#19c41f" />
            <rect x="82" y="17" width="22" height="7" fill="#c8a888" />
            <path d="M84 20h14" stroke="#fff" strokeWidth="2" />
            <path d="M110 12h24v11h-8v8h-16z" fill="#19c41f" />
            <rect x="124" y="14" width="7" height="5" fill="#655" />
          </>} />
        </MiniMap>
        <Coords>{"X:  1622.91\nY:  -215.29"}</Coords>
        <NoteBox />
        <PanelFoot />
      </Panel>
    </Workspace>
    <LayerBar>
      <LayerBtn $w={18}>S</LayerBtn>
      <LayerBtn $w={84} $ml={2} $big>显示层</LayerBtn>
      <LayerBtn $w={16} $ml={1}>◂</LayerBtn>
      <LayerBtn $w={8} $ml={3}></LayerBtn>
      <LayerBtn $w={16} $ml={4}>▸</LayerBtn>
      <LayerBtn $w={30} $ml={2}>全部</LayerBtn>
      <Cells>
        {Array.from({ length: 31 }).map((_, i) => {
          const spec: Record<number, [string, string, string]> = {
            3: ["#47803f", "#1b2b18", "S"], 4: ["#fff", "#4a6acb", "M*"], 5: ["#a5123f", "#3a0a18", "L"], 6: ["#e8c866", "#333", "XL"], 7: ["#4a6acb", "#cfd8f8", "2XL"],
          };
          const s = spec[i];
          return <Cell key={i} $bg={s ? s[0] : "#3a3a3a"} $fg={s?.[1]} $ring={i === 4}>{s?.[2]}</Cell>;
        })}
      </Cells>
      <LayerBtn $w={27} $ml={3}>L</LayerBtn>
      <LayerBtn $w={27}>R</LayerBtn>
    </LayerBar>
    <Taskbar>
      <TaskLeft>
        <TaskPlain $w={46}><Ic s={18} c={<path d="M1 3l7-1v6H1zM9 2l8-1v7H9zM1 9h7v6l-7-1zM9 9h8v7l-8-1z" fill="#000" />} /></TaskPlain>
        <TaskPlain $w={50}><Ic s={18} c={<path d="M3 2h12M3 16h12M4 5h8v8H4zM15 5h1v2h-1zM15 11h1v2h-1z" stroke="#222" />} /></TaskPlain>
      </TaskLeft>
      <TaskApp $ml={7}><Ic c={<><path d="M2 4h7l2 2h9v14H2z" fill="#f3c64e" /><rect x="7" y="12" width="8" height="8" fill="#1a7fd0" /><rect x="9" y="15" width="4" height="5" fill="#fff" /></>} /></TaskApp>
      <TaskApp $ml={9}><Ic s={24} c={<><rect x="1" y="1" width="22" height="22" fill="#fff" stroke="#222" /><path d="M2 2h9v7l-3 2-6-2z" fill="#e02020" /><path d="M13 2h9v9h-5l-4-4z" fill="#f0d010" /><path d="M2 13h7v9H2z" fill="#fff" /><path d="M11 14h11v8H11z" fill="#1030c0" /></>} /></TaskApp>
      <TaskApp $ml={9}><Ic s={24} c={<><ellipse cx="10" cy="10" rx="8" ry="8" fill="#31c354" /><ellipse cx="17" cy="16" rx="6" ry="5.5" fill="#eee" /><circle cx="7" cy="9" r="1" fill="#123" /><circle cx="13" cy="9" r="1" fill="#123" /></>} /></TaskApp>
      <TaskApp $ml={5} $active><Ic s={26} c={<><rect x="3" y="2" width="20" height="22" fill="#eef" stroke="#3a3ad0" strokeWidth="2" /><path d="M12 14L22 1l3 2-10 13z" fill="#d22" /><path d="M2 16h10l-3 9H2z" fill="#f0e010" /></>} /></TaskApp>
      <TaskApp $ml={4}><Ic s={24} c={<><path d="M6 3l14-1 2 20-14 1z" fill="#8a8a8a" /><path d="M3 4l14-1 2 19-13 1z" fill="#7ec0e0" /></>} /></TaskApp>
      <TaskApp $ml={9}><Ic s={26} c={<><rect x="2" y="2" width="22" height="22" rx="2" fill="#a8e098" /><path d="M2 2h11v11H2z" fill="#f0a0b0" /><path d="M2 13h11v11H2z" fill="#fcc890" /><path d="M2 2l11 11" stroke="#b02030" strokeWidth="3" /><circle cx="13" cy="13" r="3" fill="#d22" /><path d="M14 14v10l3-3 3 4 1-1-2-4h4z" fill="#fff" stroke="#111" strokeWidth=".8" /></>} /></TaskApp>
      <Tray>
        <TrayIcon $w={24}><Ic s={14} c={<path d="M1 10l6-6 6 6" stroke="#222" strokeWidth="1.2" />} /></TrayIcon>
        <TrayIcon $w={24}><Ic s={18} c={<><circle cx="7" cy="8" r="6" fill="#31b85a" /><circle cx="13" cy="12" r="4.5" fill="#eee" /></>} /></TrayIcon>
        <TrayIcon $w={24}><Ic s={18} c={<><rect x="1" y="4" width="11" height="11" fill="#666" /><path d="M12 7l5-2v9l-5-2z" fill="#666" /></>} /></TrayIcon>
        <TrayIcon $w={24}><Ic s={18} c={<><ellipse cx="9" cy="7" rx="5" ry="6" fill="#111" /><ellipse cx="9" cy="13" rx="6" ry="4.5" fill="#fff" stroke="#111" /><path d="M3 11h12v2H3z" fill="#d22" /><path d="M6 3h6" stroke="#fff" /></>} /></TrayIcon>
        <TrayIcon $w={24}><Ic s={18} c={<path d="M2 7h3l4-4v12l-4-4H2zM11 6c2 2 2 4 0 6M14 4c3 3 3 7 0 10" stroke="#222" />} /></TrayIcon>
        <TrayIcon $w={24}>中</TrayIcon>
        <TrayIcon $w={34}><Ic s={18} c={<><path d="M3 2l13-1 1 14-13 2z" fill="#f05a22" /><path d="M12 5H7v4h5v4H6" stroke="#fff" strokeWidth="1.8" /></>} /></TrayIcon>
        <Clock>15:20<br />2022/9/19</Clock>
        <Notify><Ic s={26} c={<><path d="M2 2h15v11H8l-3 3v-3H2z" fill="#111" /><path d="M5 5h9M5 8h9" stroke="#ddd" /><circle cx="16" cy="17" r="7" fill="#d2d2d2" stroke="#555" /><text x="13.5" y="21" fontSize="11" fontWeight="700" fill="#222" fontFamily="Liberation Sans">1</text></>} /></Notify>
      </Tray>
    </Taskbar>
  </Screen>
);

export default App;
